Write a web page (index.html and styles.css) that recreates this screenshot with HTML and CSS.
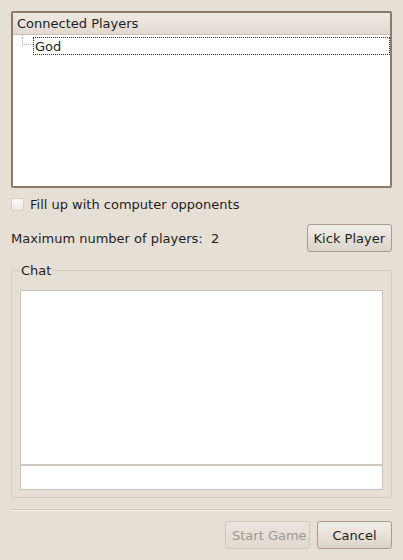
FILE: index.html
```html
<!DOCTYPE html>
<html lang="en">
<head>
    <meta charset="UTF-8">
    <title>Network Game</title>
    <link rel="stylesheet" href="styles.css">
</head>
<body>
    <div class="dialogo">
        <div class="lista-jogadores">
            <div class="cabecalho">Connected Players</div>
            <div class="linha">
                <span class="ramo"></span>
                <span class="nome">God</span>
            </div>
        </div>

        <label class="opcao">
            <span class="caixa"></span>
            Fill up with computer opponents
        </label>

        <div class="linha-maximo">
            <span>Maximum number of players:&nbsp; 2</span>
            <button class="botao">Kick Player</button>
        </div>

        <fieldset class="quadro-chat">
            <legend>Chat</legend>
            <div class="texto-chat"></div>
            <div class="entrada-chat"></div>
        </fieldset>

        <div class="separador"></div>

        <div class="acoes">
            <button class="botao desativado">Start Game</button>
            <button class="botao botao-cancelar">Cancel</button>
        </div>
    </div>
</body>
</html>
```

FILE: styles.css
```css
body {
    margin: 0;
    background-color: #e6dfd6;
    font-family: "DejaVu Sans", sans-serif;
    font-size: 13px;
    color: #1e1e1e;
}

.dialogo {
    width: 381px;
    padding: 11px 12px 0 11px;
    display: flex;
    flex-direction: column;
}

.lista-jogadores {
    height: 173px;
    border: 2px solid #8c7a6b;
    border-radius: 2px;
    background-color: #fff;
}

.cabecalho {
    height: 21px;
    line-height: 22px;
    padding-left: 4px;
    background: linear-gradient(#efe9e2, #e2dad1);
    border-bottom: 1px solid #c8beb3;
}

.linha {
    display: flex;
    align-items: center;
    height: 18px;
    margin-top: 2px;
}

.ramo {
    width: 10px;
    height: 7px;
    margin-left: 9px;
    border-left: 1px dotted #b0aaa4;
    border-bottom: 1px dotted #b0aaa4;
    align-self: flex-start;
}

.nome {
    flex: 1;
    height: 16px;
    line-height: 17px;
    padding-left: 1px;
    border: 1px dotted #333;
}

.opcao {
    display: flex;
    align-items: center;
    gap: 6px;
    margin-top: 8px;
    height: 16px;
}

.caixa {
    width: 11px;
    height: 11px;
    border: 1px solid #d6cec5;
    border-radius: 2px;
    background: linear-gradient(#fbf9f7, #ece7e1);
}

.linha-maximo {
    display: flex;
    justify-content: space-between;
    align-items: center;
    margin-top: 12px;
}

.botao {
    font-family: "DejaVu Sans", sans-serif;
    font-size: 13px;
    color: #1e1e1e;
    height: 28px;
    padding: 0 6px;
    white-space: nowrap;
    border: 1px solid #a89c90;
    border-radius: 3px;
    background: linear-gradient(#f1ede8, #dcd4ca);
}

.quadro-chat {
    margin: 11px 0 0;
    padding: 12px 8px 7px 8px;
    border: 1px solid #d4cbc1;
    border-radius: 2px;
    display: flex;
    flex-direction: column;
}

.quadro-chat legend {
    padding: 0 1px;
    margin-left: 0;
}

.texto-chat {
    height: 173px;
    background-color: #fff;
    border: 1px solid #c9c1b8;
    border-bottom: 2px solid #cfc8c0;
}

.entrada-chat {
    height: 23px;
    background-color: #fff;
    border: 1px solid #c9c1b8;
    border-top: none;
}

.separador {
    margin-top: 11px;
    height: 0;
    border-top: 1px solid #cfc6bb;
    border-bottom: 1px solid #f6f2ee;
}

.acoes {
    display: flex;
    justify-content: flex-end;
    gap: 7px;
    margin-top: 10px;
}

.desativado {
    color: #9e978f;
    border-color: #cfc6bc;
    background: linear-gradient(#ebe5de, #e0d9d0);
    width: 85px;
}

.botao-cancelar {
    width: 75px;
}
```
